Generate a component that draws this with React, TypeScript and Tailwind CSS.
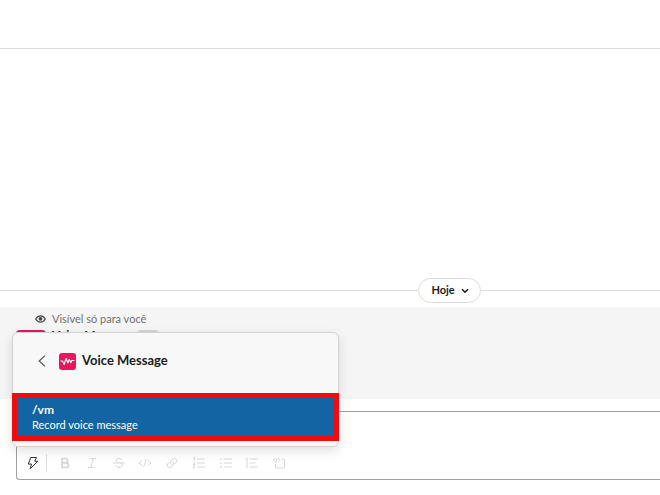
import React from 'react';

interface IconProps {
  className?: string;
  children: React.ReactNode;
}

const Icon: React.FC<IconProps> = ({ className = '', children }) => {
  return (
    <svg
      viewBox="0 0 14 14"
      className={`h-3.5 w-3.5 ${className}`}
      fill="none"
      stroke="currentColor"
      strokeWidth="1"
      strokeLinecap="round"
      strokeLinejoin="round"
      aria-hidden="true"
    >
      {children}
    </svg>
  );
};

interface ToolButtonProps {
  label: string;
  children: React.ReactNode;
}

const ToolButton: React.FC<ToolButtonProps> = ({ label, children }) => {
  return (
    <button type="button" aria-label={label} className="flex h-5 w-5 items-center justify-center text-[#d6d6d6]">
      {children}
    </button>
  );
};

const DateDivider: React.FC = () => {
  return (
    <div className="flex items-center">
      <div className="h-px flex-[7] bg-[#dddddd]"></div>
      <button
        type="button"
        className="flex h-[25px] items-center gap-1.5 rounded-full border border-[#dddddd] bg-white pr-[11px] pl-3 text-[11px] font-bold"
      >
        Hoje
        <svg viewBox="0 0 8 6" className="h-1.5 w-2" fill="none" stroke="currentColor" strokeWidth="1.6" aria-hidden="true">
          <path d="M1 1.2 4 4.2 7 1.2" />
        </svg>
      </button>
      <div className="h-px flex-[3] bg-[#dddddd]"></div>
    </div>
  );
};

const BotMessage: React.FC = () => {
  return (
    <div className="mt-1 h-[92px] overflow-hidden bg-[#f5f5f5] px-4 pt-1">
      <div className="flex h-4 items-center gap-1.5 pl-[19px] text-[11px] text-[#717171]">
        <svg viewBox="0 0 11 8" className="h-2 w-[11px]" aria-hidden="true">
          <path
            d="M.7 4C1.8 2 3.5.9 5.5.9S9.2 2 10.3 4C9.2 6 7.5 7.1 5.5 7.1S1.8 6 .7 4Z"
            fill="none"
            stroke="#4a4a4a"
            strokeWidth="1.3"
          />
          <circle cx="5.5" cy="3.8" r="1.9" fill="#4a4a4a" />
        </svg>
        <span>Visível só para você</span>
      </div>
      <div className="mt-[3px] flex items-start gap-1.5">
        <div className="h-[30px] w-[30px] rounded bg-[#e01765]"></div>
        <span className="text-[12px] leading-[10px] font-bold">Voice Message</span>
        <span className="h-3 w-[22px] rounded-sm bg-[#d2d2d2]"></span>
      </div>
    </div>
  );
};

const CommandMenu: React.FC = () => {
  return (
    <div className="absolute -left-[5px] bottom-8 w-[327px] rounded-md border border-[#d2d2d2] bg-[#f8f8f8] shadow-[0_4px_12px_rgba(0,0,0,0.12)]">
      <div className="flex h-[60px] items-center pr-4 pb-1 pl-6">
        <button type="button" aria-label="Voltar" className="flex w-[10px] justify-center">
          <svg viewBox="0 0 8 12" className="h-3 w-2" fill="none" stroke="#555555" strokeWidth="1.2" aria-hidden="true">
            <path d="M7 .6 1.2 6 7 11.4" />
          </svg>
        </button>
        <svg viewBox="0 0 17 17" className="ml-3 h-[17px] w-[17px]" aria-hidden="true">
          <rect width="17" height="17" rx="3" fill="#e8175d" />
          <path
            d="M1.5 8h2l1.6 3.4 2-5.900 1.700 4.500 1.500-3.600 1.500 3.200 1-2.100h2.500"
            fill="none"
            stroke="#ffffff"
            strokeWidth="1.2"
            strokeLinejoin="round"
          />
        </svg>
        <h2 className="ml-1.5 text-[13px] font-bold">Voice Message</h2>
      </div>
      <button
        type="button"
        className="-mx-px block w-[327px] border-[5px] border-[#f10b0b] bg-[#1264a3] px-[15px] py-1 text-left text-white"
      >
        <span className="block text-[12px] leading-[15px] font-bold">/vm</span>
        <span className="block text-[11px] leading-[15px]">Record voice message</span>
      </button>
      <div className="h-[5px]"></div>
    </div>
  );
};

const Toolbar: React.FC = () => {
  return (
    <div className="flex items-center px-1.5 pb-1.5">
      <button type="button" aria-label="Atalhos" className="flex h-5 w-5 items-center justify-center text-[#333333]">
        <Icon>
          <path d="M5.2 1.5h5.3L8.7 5.2h3.100L4.2 12.8l1.300-4.700H2.700Z" />
        </Icon>
      </button>
      <div className="mr-2 ml-[3px] h-[18px] w-px bg-[#dddddd]"></div>
      <div className="flex w-[234px] justify-between">
        <ToolButton label="Negrito">
          <Icon>
            <path strokeWidth="1.7" d="M4 2.500h3.500a2.200 2.200 0 0 1 0 4.400H4ZM4 6.900h4.200a2.300 2.300 0 0 1 0 4.600H4Z" />
          </Icon>
        </ToolButton>
        <ToolButton label="Itálico">
          <Icon>
            <path d="M5.500 2.500h5M3.500 11.500h5M8.300 2.500l-2.600 9" />
          </Icon>
        </ToolButton>
        <ToolButton label="Tachado">
          <Icon>
            <path d="M1.500 7h11M10 4.200C9.500 3 8.500 2.500 7 2.500c-2 0-3 1-3 2.300 0 .9.600 1.600 1.500 2.200M8.700 7c1 .5 1.500 1.300 1.500 2.300 0 1.300-1.200 2.200-3.200 2.200-1.700 0-2.800-.6-3.200-1.900" />
          </Icon>
        </ToolButton>
        <ToolButton label="Código">
          <Icon>
            <path d="M3.700 4.500 1 7l2.700 2.500M10.300 4.500 13 7l-2.700 2.500M8.200 3.500l-2.400 7" />
          </Icon>
        </ToolButton>
        <ToolButton label="Link">
          <Icon>
            <path d="M6 8.300a2.300 2.300 0 0 1 0-3.200l2.200-2.200a2.300 2.300 0 0 1 3.200 3.200L9.800 7.700" />
            <path d="M8 5.700a2.300 2.300 0 0 1 0 3.200l-2.200 2.200a2.300 2.300 0 0 1-3.200-3.200l1.600-1.600" />
          </Icon>
        </ToolButton>
        <ToolButton label="Lista ordenada">
          <Icon>
            <path d="M5.500 3h7M5.500 7h7M5.500 11h7M1.500 2l.8-.5v2.800M1.300 6.500c.8-.8 1.800 0 1.200.7L1.300 8.500h1.500M1.300 10h1.400l-.8 1c1.500.2.800 1.600-.6 1.200" />
          </Icon>
        </ToolButton>
        <ToolButton label="Lista com marcadores">
          <Icon>
            <path d="M5 3h7.500M5 7h7.500M5 11h7.500" />
            <path strokeWidth="1.7" d="M1.800 3h.1M1.800 7h.1M1.800 11h.1" />
          </Icon>
        </ToolButton>
        <ToolButton label="Citação">
          <Icon>
            <path d="M2 2v10M5 3h7M5 7h5M5 11h7" />
          </Icon>
        </ToolButton>
        <ToolButton label="Bloco de código">
          <Icon>
            <path d="M2.500 2.500 1 4.200l1.500 1.700M6.500 2.500 8 4.200 6.500 5.900M5 2 4 6.400M10 3h1.500a1 1 0 0 1 1 1v7a1 1 0 0 1-1 1h-7a1 1 0 0 1-1-1V8.500" />
          </Icon>
        </ToolButton>
      </div>
    </div>
  );
};

export default function App() {
  return (
    <div className="flex min-h-screen flex-col overflow-x-hidden bg-white font-['Lato',sans-serif] text-[#1d1c1d]">
      <header className="h-[49px] border-b border-[#dddddd]"></header>
      <main className="flex flex-1 flex-col justify-end pb-[15px]">
        <DateDivider />
        <BotMessage />
        <div className="relative mt-3 ml-4 rounded-l border border-r-0 border-[#a0a0a0]">
          <textarea aria-label="Mensagem" rows={1} className="block h-[41px] w-full resize-none px-2 py-1 text-xs outline-none"></textarea>
          <Toolbar />
          <CommandMenu />
        </div>
      </main>
    </div>
  );
}
